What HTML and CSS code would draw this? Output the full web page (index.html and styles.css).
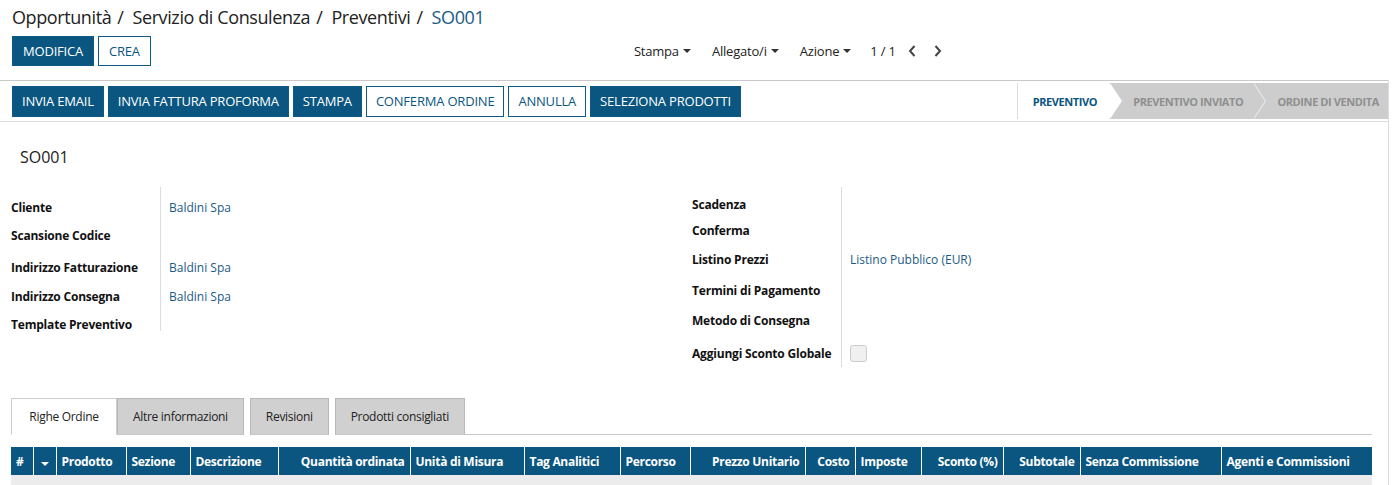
FILE: index.html
```html
<!DOCTYPE html>
<html lang="it">
<head>
<meta charset="utf-8">
<title>SO001</title>
<link rel="stylesheet" href="styles.css">
</head>
<body>
<div class="app">
  <div class="control-panel">
    <ol class="breadcrumb">
      <li>Opportunità</li><li class="sep">/</li>
      <li>Servizio di Consulenza</li><li class="sep">/</li>
      <li>Preventivi</li><li class="sep">/</li>
      <li class="current">SO001</li>
    </ol>
    <div class="cp-bottom">
      <div class="cp-buttons">
        <button class="btn btn-primary">MODIFICA</button>
        <button class="btn btn-secondary">CREA</button>
      </div>
      <div class="cp-sidebar">
        <span class="dd">Stampa <i class="caret"></i></span>
        <span class="dd">Allegato/i <i class="caret"></i></span>
        <span class="dd last">Azione <i class="caret"></i></span>
        <span class="pager">1 / 1</span>
        <span class="pager-btns">
          <svg width="10" height="14" viewBox="0 0 10 14"><path d="M7.5 2 L3 7 L7.5 12" fill="none" stroke="#444" stroke-width="2"/></svg>
          <svg width="10" height="14" viewBox="0 0 10 14"><path d="M2.5 2 L7 7 L2.5 12" fill="none" stroke="#444" stroke-width="2"/></svg>
        </span>
      </div>
    </div>
  </div>

  <div class="content">
    <div class="statusbar">
      <div class="sb-buttons">
        <button class="btn btn-primary">INVIA EMAIL</button>
        <button class="btn btn-primary">INVIA FATTURA PROFORMA</button>
        <button class="btn btn-primary">STAMPA</button>
        <button class="btn btn-secondary">CONFERMA ORDINE</button>
        <button class="btn btn-secondary">ANNULLA</button>
        <button class="btn btn-primary">SELEZIONA PRODOTTI</button>
      </div>
      <div class="sb-steps">
        <div class="step active">PREVENTIVO</div>
        <div class="step">PREVENTIVO INVIATO</div>
        <div class="step last">ORDINE DI VENDITA</div>
      </div>
    </div>

    <div class="sheet">
      <h1 class="title">SO001</h1>
      <div class="groups">
        <div class="group left">
          <div class="row lr1"><div class="lbl">Cliente</div><div class="val"><a>Baldini Spa</a></div></div>
          <div class="row lr2"><div class="lbl">Scansione Codice</div><div class="val"></div></div>
          <div class="row lr3"><div class="lbl">Indirizzo Fatturazione</div><div class="val"><a>Baldini Spa</a></div></div>
          <div class="row lr4"><div class="lbl">Indirizzo Consegna</div><div class="val"><a>Baldini Spa</a></div></div>
          <div class="row lr5"><div class="lbl">Template Preventivo</div><div class="val"></div></div>
        </div>
        <div class="group right">
          <div class="row rr1"><div class="lbl">Scadenza</div><div class="val"></div></div>
          <div class="row rr2"><div class="lbl">Conferma</div><div class="val"></div></div>
          <div class="row rr3"><div class="lbl">Listino Prezzi</div><div class="val"><a>Listino Pubblico (EUR)</a></div></div>
          <div class="row rr4"><div class="lbl">Termini di Pagamento</div><div class="val"></div></div>
          <div class="row rr5"><div class="lbl">Metodo di Consegna</div><div class="val"></div></div>
          <div class="row rr6"><div class="lbl">Aggiungi Sconto Globale</div><div class="val"><span class="checkbox"></span></div></div>
        </div>
      </div>

      <div class="tabs">
        <div class="tab active">Righe Ordine</div>
        <div class="tab">Altre informazioni</div>
        <div class="tab">Revisioni</div>
        <div class="tab">Prodotti consigliati</div>
        <div class="tab-fill"></div>
      </div>

      <table class="lines">
        <colgroup>
          <col width="22"><col width="23"><col width="70"><col width="64"><col width="88">
          <col width="132"><col width="114"><col width="96"><col width="70"><col width="115">
          <col width="50"><col width="66"><col width="82"><col width="77"><col width="141"><col width="151">
        </colgroup>
        <thead>
          <tr>
            <th>#</th>
            <th class="c"><i class="caret white"></i></th>
            <th>Prodotto</th>
            <th>Sezione</th>
            <th>Descrizione</th>
            <th class="r">Quantità ordinata</th>
            <th>Unità di Misura</th>
            <th>Tag Analitici</th>
            <th>Percorso</th>
            <th class="r">Prezzo Unitario</th>
            <th class="r">Costo</th>
            <th>Imposte</th>
            <th class="r">Sconto (%)</th>
            <th class="r">Subtotale</th>
            <th>Senza Commissione</th>
            <th>Agenti e Commissioni</th>
          </tr>
        </thead>
        <tbody>
          <tr class="empty"><td colspan="16"></td></tr>
        </tbody>
      </table>
    </div>
  </div>
</div>
</body>
</html>
```

FILE: styles.css
```css
* { box-sizing: border-box; }
html, body { margin: 0; padding: 0; background: #fff; }
body {
  font-family: "Open Sans", "Noto Sans", sans-serif;
  color: #222;
  font-size: 12px;
  overflow: hidden;
}
.app { width: 1394px; height: 485px; overflow: hidden; }

/* control panel */
.control-panel { padding: 0 12px; height: 80px; }
.breadcrumb {
  list-style: none; margin: 0; padding: 4px 0 0 0;
  display: flex; align-items: center; height: 30px;
  font-size: 18px; color: #222; letter-spacing: -0.4px;
}
.breadcrumb li { white-space: nowrap; }
.breadcrumb .sep { margin: 0 9px 0 6px; }
.breadcrumb .current { color: #1b5b84; }
.cp-bottom { display: flex; align-items: center; margin-top: 3px; padding-top: 3px; height: 33px; }
.cp-buttons { display: flex; gap: 4px; }
.cp-sidebar {
  display: flex; align-items: center; margin-left: 483px;
  font-size: 13px; color: #222; letter-spacing: -0.2px;
}
.dd { display: inline-flex; align-items: center; margin-right: 21px; }
.dd.last { margin-right: 19px; }
.caret {
  display: inline-block; width: 0; height: 0; margin-left: 4px;
  border-left: 4px solid transparent; border-right: 4px solid transparent;
  border-top: 4px solid #333;
}
.caret.white { border-top-color: #fff; margin-left: 0; }
.pager { margin-right: 11px; }
.pager-btns { display: inline-flex; gap: 16px; align-items: center; }

/* buttons */
.btn {
  font-family: inherit; font-size: 13px; height: 30px; padding: 0 10px;
  border: 1px solid #0c5a85; cursor: pointer; letter-spacing: -0.2px;
  display: inline-flex; align-items: center; justify-content: center;
}
.btn-primary { background: #0a5680; color: #fff; }
.btn-secondary { background: #fff; color: #0a5680; }

/* content */
.content { border-right: 1px solid #ddd; width: 1389px; height: 405px; }
.statusbar {
  display: flex; align-items: center; justify-content: space-between;
  border-top: 1px solid #c8c8c8; border-bottom: 1px solid #ddd;
  height: 42px; padding-left: 12px;
}
.sb-buttons { display: flex; gap: 4px; }
.sb-buttons .btn { height: 31px; padding: 0 9px; }
.sb-steps { display: flex; height: 36px; align-self: center; border-left: 1px solid #ddd; }
.step {
  position: relative; display: flex; align-items: center;
  background: #cdcdcd; color: #8f8f8f;
  font-weight: 700; font-size: 11px; letter-spacing: -0.4px;
  padding: 0 10px 0 24px;
}
.step::after {
  content: ""; position: absolute; right: -12px; top: 0; z-index: 2;
  border-top: 18px solid transparent; border-bottom: 18px solid transparent;
  border-left: 12px solid #cdcdcd;
}
.step::before {
  content: ""; position: absolute; right: -13px; top: 0; z-index: 1;
  border-top: 18px solid transparent; border-bottom: 18px solid transparent;
  border-left: 12px solid #f0f0f0;
}
.step.active { background: #fff; color: #0a5680; padding: 0 12px 0 15px; }
.step.active::after { border-left-color: #fff; }
.step.active::before { border-left-color: #fff; }
.step.last { padding-right: 9px; }
.step.last::after, .step.last::before { display: none; }

/* sheet */
.sheet { padding: 0 0 0 11px; }
.title { font-size: 16px; font-weight: 400; margin: 0; padding: 25px 0 0 9px; height: 65px; line-height: 20px; color: #222; }
.groups { display: flex; }
.group { display: flex; flex-direction: column; }
.group.left { width: 681px; }
.row { display: flex; }
.lbl {
  font-weight: 700; font-size: 12px; color: #111; line-height: 14px;
  border-right: 1px solid #ddd; letter-spacing: -0.2px;
}
.val { line-height: 14px; padding-left: 8px; font-size: 12px; }
.val a { color: #1b5b84; text-decoration: none; }
.left .lbl { width: 150px; }
.right .lbl { width: 150px; }
.lr1 .lbl, .lr1 .val { padding-top: 14px; height: 35px; }
.lr2 .lbl, .lr2 .val { padding-top: 7px; height: 30px; }
.lr3 .lbl, .lr3 .val { padding-top: 9px; height: 30px; }
.lr4 .lbl, .lr4 .val { padding-top: 8px; height: 29px; }
.lr5 .lbl, .lr5 .val { padding-top: 7px; height: 20px; }
.rr1 .lbl, .rr1 .val { padding-top: 11px; height: 31px; }
.rr2 .lbl, .rr2 .val { padding-top: 6px; height: 28px; }
.rr3 .lbl, .rr3 .val { padding-top: 7px; height: 29px; }
.rr4 .lbl, .rr4 .val { padding-top: 9px; height: 31px; }
.rr5 .lbl, .rr5 .val { padding-top: 8px; height: 31px; }
.rr6 .lbl, .rr6 .val { padding-top: 10px; height: 30px; }
.rr6 .val { padding-top: 8px; }
.checkbox {
  display: block; width: 17px; height: 17px; border: 1px solid #ccc;
  border-radius: 3px; background: #f0f0f0;
}

/* tabs */
.tabs { display: flex; margin-top: 31px; height: 37px; width: 1361px; }
.tab {
  font-size: 12px; color: #222; padding: 0 15px; letter-spacing: -0.3px;
  display: flex; align-items: center;
  background: #d0d0d0; border: 1px solid #b9b9b9; border-bottom: 1px solid #c8c8c8;
  margin-right: 6px;
}
.tab.active { background: #fff; border-color: #ccc; border-bottom-color: #fff; margin-right: 0; width: 106px; justify-content: center; padding: 0; }
.tab-fill { flex: 1; border-bottom: 1px solid #c8c8c8; margin-left: -6px; }

/* table */
.lines { border-collapse: collapse; table-layout: fixed; width: 1361px; margin-top: 12px; }
.lines th {
  background: #0a5680; color: #fff; font-weight: 700; font-size: 12px;
  height: 28px; padding: 0 5px; text-align: left; white-space: nowrap; overflow: hidden;
  border-left: 1px solid #fff; letter-spacing: -0.3px;
}
.lines th:first-child { border-left: none; }
.lines th.r { text-align: right; }
.lines th.c { text-align: center; }
.lines .empty td { background: #ececec; height: 30px; }
```
